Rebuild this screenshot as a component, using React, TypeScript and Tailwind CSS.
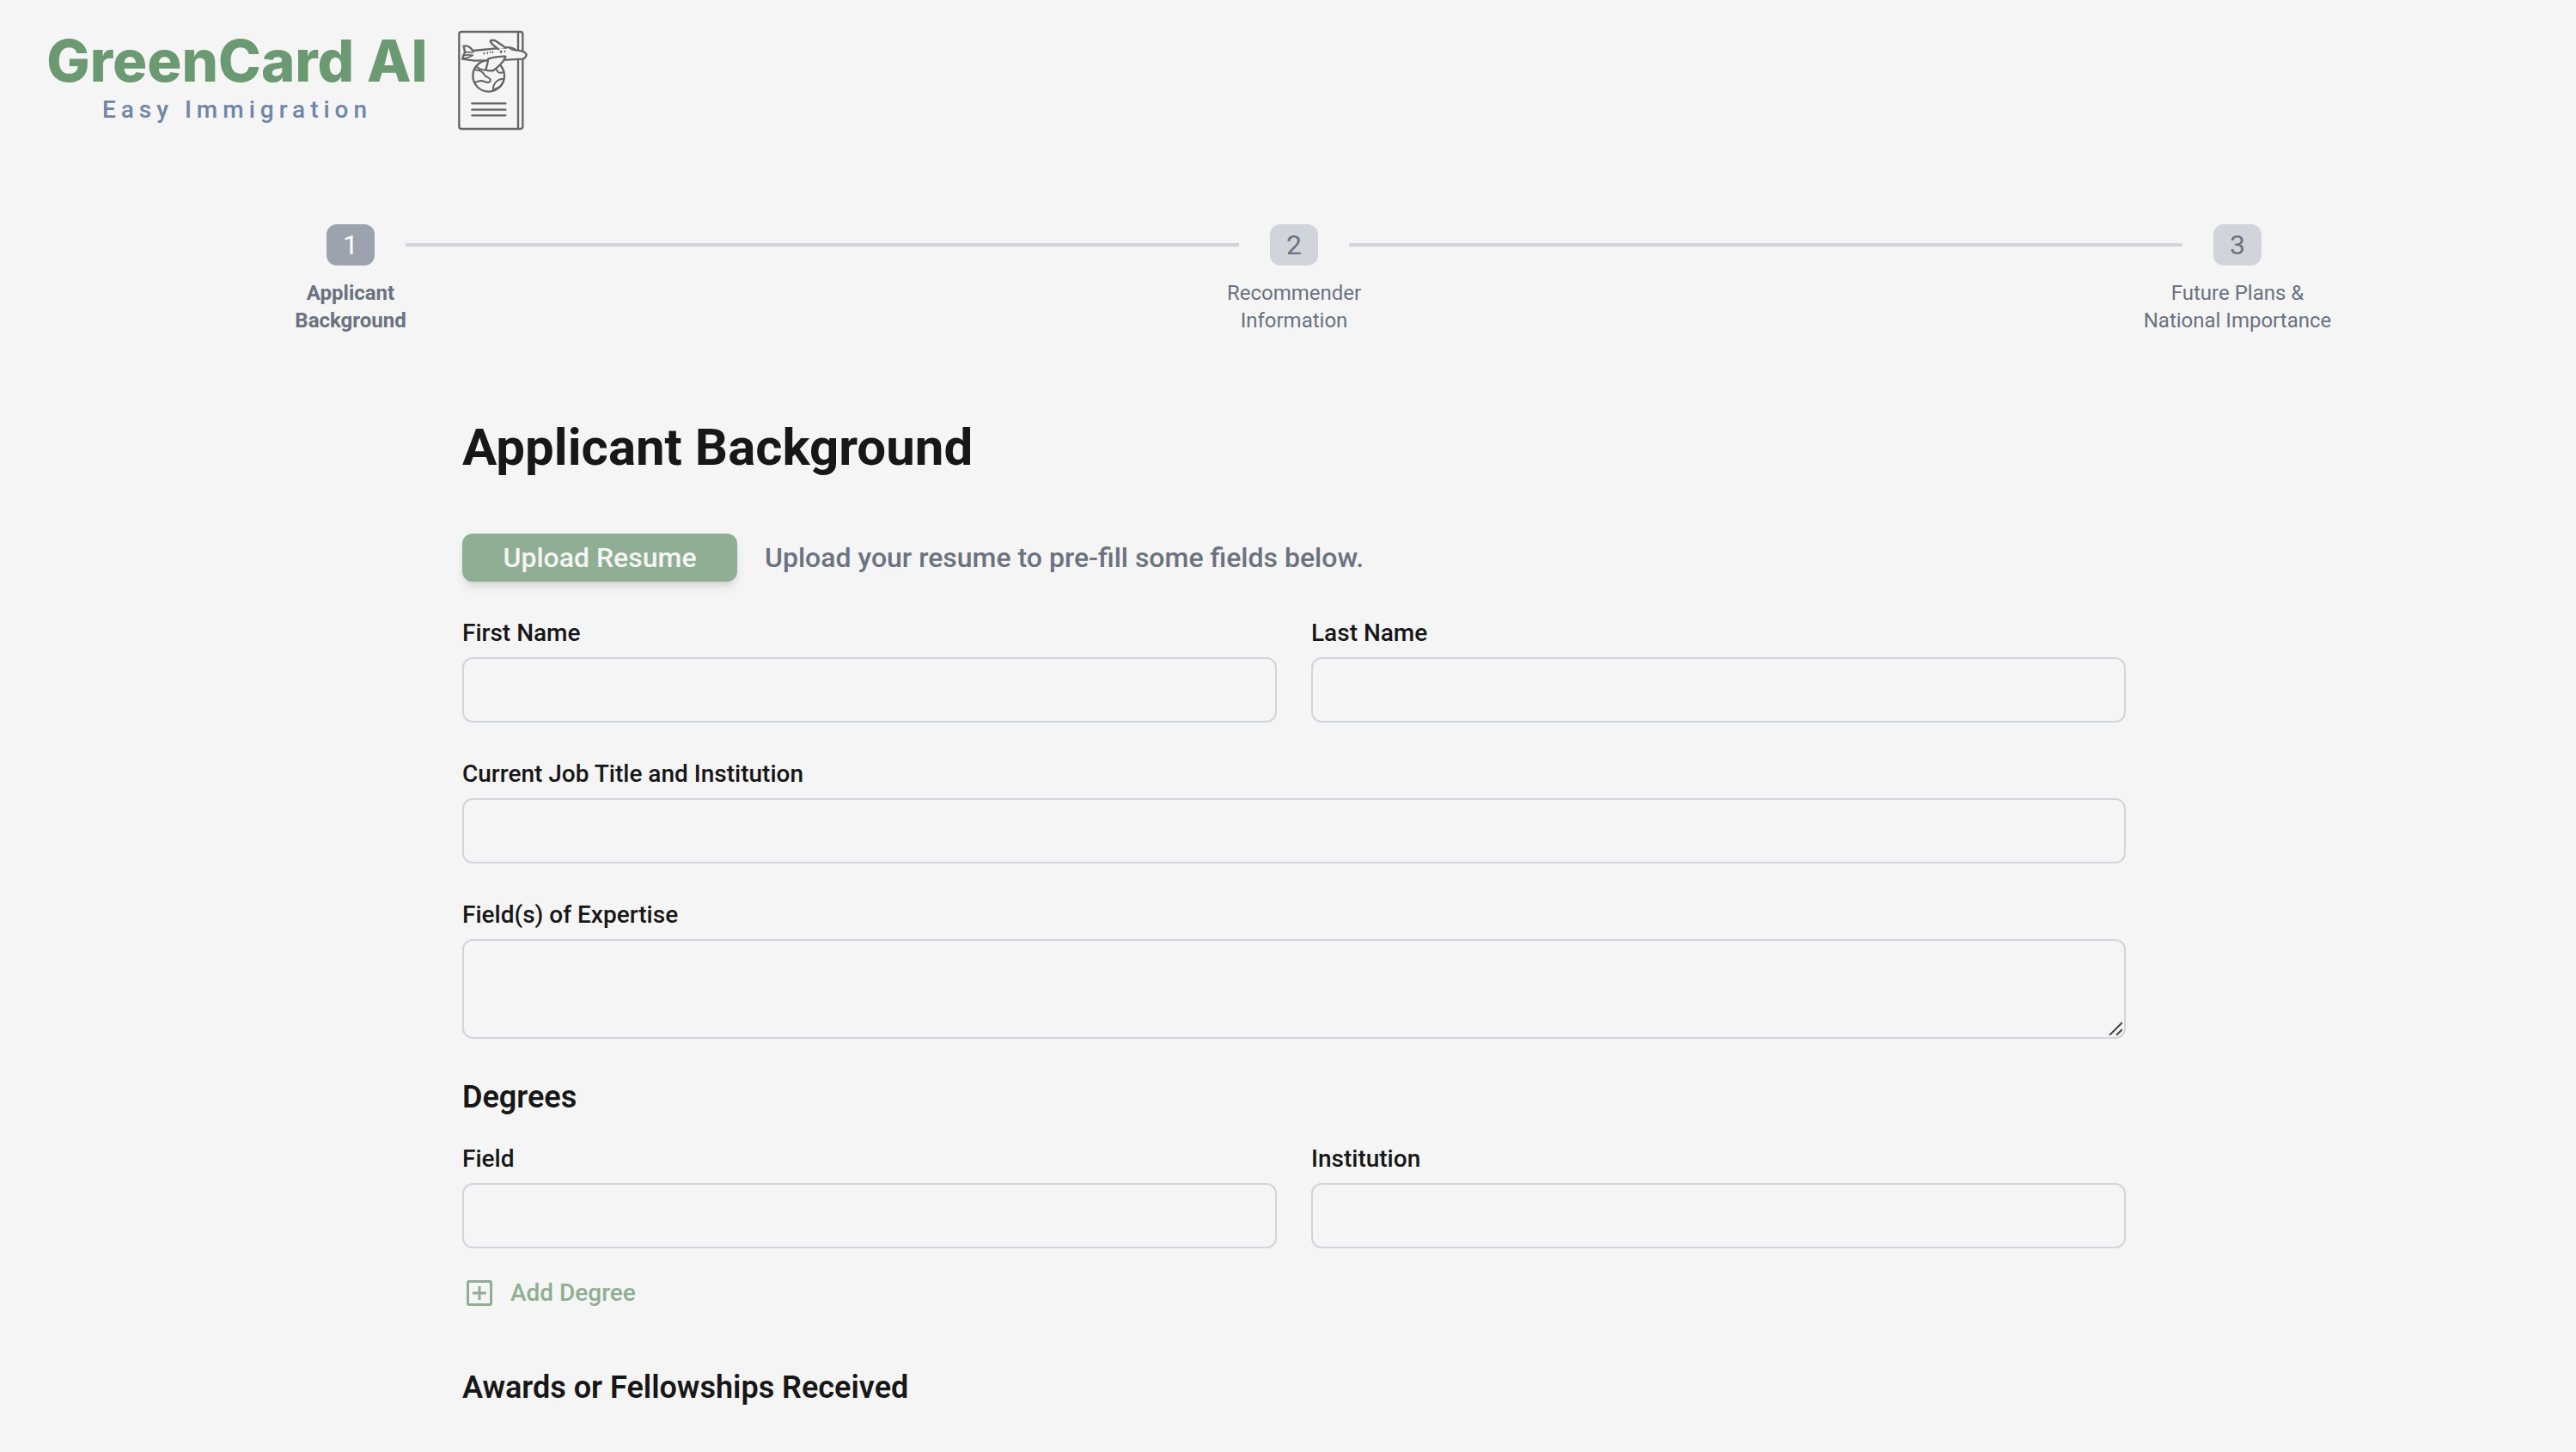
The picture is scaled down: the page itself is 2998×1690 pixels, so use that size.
import React, { useState } from "react";

const steps = [
  { lines: ["Applicant", "Background"] },
  { lines: ["Recommender", "Information"] },
  { lines: ["Future Plans &", "National Importance"] },
];

const fieldClass =
  "block w-full rounded-xl border-2 border-[#d1d5db] bg-transparent px-6 text-[28px] leading-10 text-[#171717] outline-none focus:border-[#8fae93]";

function PassportIcon() {
  return (
    <svg width="82" height="120" viewBox="39 42 246 360" fill="none" stroke="#666666" strokeWidth="7" strokeLinecap="round" strokeLinejoin="round" aria-hidden="true">
      <rect x="46" y="51" width="222" height="339" rx="8" />
      <path d="M252 51V390" />
      <ellipse cx="149" cy="205" rx="55" ry="55" />
      <g strokeWidth="6">
        <path d="M106 172c8 8 20 12 32 13M103 184c16 1 26 8 32 18 6 8 18 8 20 16 1 10-8 12-20 7-12-6-20-2-35 3" />
        <path d="M202 215c-24 0-38 18-38 40" />
        <path d="M202 215c0 16-12 30-36 38" />
        <path d="M170 178c8 4 10 14 16 16 6 1 12-1 16-3" />
      </g>
      <path fill="#f5f5f5" d="M57 146l9-24-4-21c14-4 24 4 32 16l112-11c14-2 30 1 38 9l20 3c10 3 16 8 17 13-1 8-5 12-12 15L210 149l-110 3Z" />
      <path fill="#f5f5f5" d="M184 112l-23-18c-2-5-6-8-6-12 10-4 18-2 26 6l28 19" />
      <path fill="#f5f5f5" d="M148 145c18-6 38-9 60-8-4 16-26 38-43 49-10 2-18 2-26-3 4-12 7-24 9-38Z" />
      <g strokeWidth="5">
        <path d="M68 122l28 1M60 134c12-3 22-3 34-1-8 6-20 8-32 11M222 107c4 6 12 8 22 8" />
        <path d="M133 124v4M145 123v4M155 122v1M163 121v3M191 119v4M194 119v4M206 118v3" />
      </g>
      <path d="M91 301H208M91 323H208M91 343H208" />
    </svg>
  );
}

function Logo() {
  return (
    <a href="#" className="flex w-fit items-start gap-9">
      <span className="flex w-[440px] flex-col items-center">
        <span className="font-[Inter] text-[67px] leading-[74px] font-extrabold whitespace-nowrap text-[#6b9a72]">GreenCard AI</span>
        <span className="text-[28px] leading-10 font-medium tracking-[6px] whitespace-nowrap text-[#6f86a6]">Easy Immigration</span>
      </span>
      <PassportIcon />
    </a>
  );
}

function Stepper() {
  return (
    <ol className="mx-auto flex w-full max-w-[2252px] items-start gap-9">
      {steps.map((step, i) => (
        <React.Fragment key={step.lines[0]}>
          {i > 0 && <li aria-hidden="true" className="mt-[22px] h-1 flex-1 bg-[#d1d5db]" />}
          <li aria-current={i === 0 ? "step" : undefined} className="flex w-14 shrink-0 flex-col items-center gap-4 text-[#6b7280]">
            <span
              className={
                i === 0
                  ? "flex h-12 w-14 items-center justify-center rounded-xl bg-[#9ca3af] text-[32px] text-white"
                  : "flex h-12 w-14 items-center justify-center rounded-xl bg-[#d1d5db] text-[32px]"
              }
            >
              {i + 1}
            </span>
            <span className={i === 0 ? "text-center text-2xl font-bold whitespace-nowrap" : "text-center text-2xl whitespace-nowrap"}>
              {step.lines[0]}
              <br />
              {step.lines[1]}
            </span>
          </li>
        </React.Fragment>
      ))}
    </ol>
  );
}

function Field({ id, label, multiline }: { id: string; label: string; multiline?: boolean }) {
  return (
    <div className="flex flex-1 flex-col gap-2">
      <label htmlFor={id} className="text-[28px] leading-10 font-medium">
        {label}
      </label>
      {multiline ? (
        <div className="relative">
          <textarea id={id} className={`${fieldClass} h-[116px] resize-y py-4 [&::-webkit-resizer]:bg-transparent`} />
          <svg width="16" height="16" viewBox="0 0 16 16" stroke="#444444" strokeWidth="2" className="pointer-events-none absolute right-1 bottom-1" aria-hidden="true">
            <path d="M1 16L16 1M9 16L16 9" />
          </svg>
        </div>
      ) : (
        <input id={id} type="text" className={`${fieldClass} h-[76px]`} />
      )}
    </div>
  );
}

export default function App() {
  const [degrees, setDegrees] = useState(1);
  return (
    <div className="min-h-screen bg-[#f5f5f5] font-[Roboto,sans-serif] text-[#171717]">
      <header className="px-14 pt-[34px]">
        <Logo />
      </header>
      <main className="pt-[107px] pr-4 pb-6 pl-[30px]">
        <Stepper />
        <form className="mx-auto mt-24 w-full max-w-[1936px]" onSubmit={(e) => e.preventDefault()}>
          <h1 className="text-6xl leading-[72px] font-bold">Applicant Background</h1>
          <div className="mt-16 flex items-center gap-8 text-[32px] leading-[48px] font-medium">
            <button type="button" className="flex h-14 w-80 items-center justify-center rounded-xl bg-[#8fae93] text-[#f5f5f5] shadow-[0_8px_12px_-2px_rgba(0,0,0,0.1),0_4px_8px_-4px_rgba(0,0,0,0.1)]">
              Upload Resume
            </button>
            <p className="text-[#6b7280]">Upload your resume to pre-fill some fields below.</p>
          </div>
          <div className="mt-10 flex flex-col gap-10">
            <div className="flex gap-10">
              <Field id="first-name" label="First Name" />
              <Field id="last-name" label="Last Name" />
            </div>
            <Field id="job" label="Current Job Title and Institution" />
            <Field id="expertise" label="Field(s) of Expertise" multiline />
          </div>
          <h2 className="mt-10 text-4xl leading-[56px] font-semibold">Degrees</h2>
          <div className="mt-6 flex flex-col gap-10">
            {Array.from({ length: degrees }, (_, i) => (
              <div key={i} className="flex gap-10">
                <Field id={`degree-field-${i}`} label="Field" />
                <Field id={`degree-institution-${i}`} label="Institution" />
              </div>
            ))}
          </div>
          <button type="button" onClick={() => setDegrees(degrees + 1)} className="mt-8 flex items-center gap-4 text-[28px] leading-10 font-medium text-[#8fae93]">
            <svg width="40" height="40" viewBox="0 0 40 40" fill="none" stroke="currentColor" strokeWidth="3" aria-hidden="true">
              <rect x="6.500" y="6.500" width="27" height="27" rx="1.500" />
              <path d="M20 12v16M12 20h16" />
            </svg>
            Add Degree
          </button>
          <h2 className="mt-[62px] text-4xl leading-[56px] font-semibold">Awards or Fellowships Received</h2>
        </form>
      </main>
    </div>
  );
}
